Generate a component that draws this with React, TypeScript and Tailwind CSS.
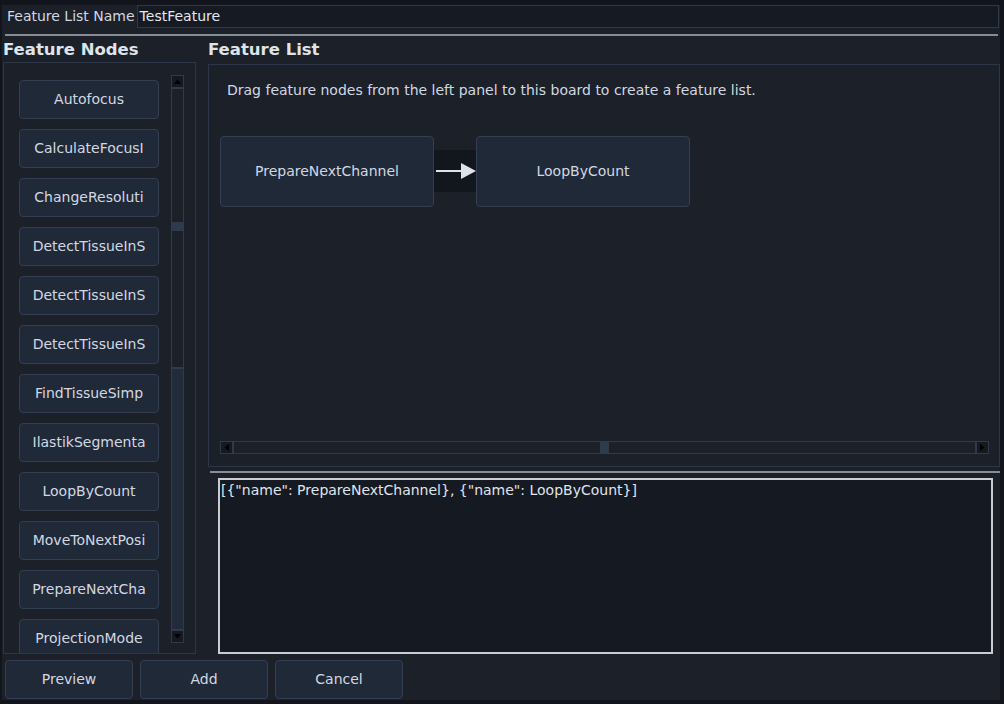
import React from "react";

const nodes = [
  "Autofocus",
  "CalculateFocusI",
  "ChangeResoluti",
  "DetectTissueInS",
  "DetectTissueInS",
  "DetectTissueInS",
  "FindTissueSimp",
  "IlastikSegmenta",
  "LoopByCount",
  "MoveToNextPosi",
  "PrepareNextCha",
  "ProjectionMode",
];

function NodeButton({ label }: { label: string }) {
  return (
    <div className="h-[39px] w-[140px] shrink-0 overflow-hidden whitespace-nowrap rounded-[4px] border border-[#343e50] bg-[#202938] px-[12px] text-center text-[14px] leading-[37px] text-[#d2d8e2]">
      {label}
    </div>
  );
}

function Btn({ label }: { label: string }) {
  return (
    <div className="flex h-[39px] w-[128px] items-center justify-center rounded-[4px] border border-[#343e50] bg-[#202938] text-[14px] text-[#d2d8e2]">
      {label}
    </div>
  );
}

export default function App() {
  return (
    <div
      className="flex h-[704px] w-[1004px] flex-col overflow-hidden border-t-[5px] border-l-[2px] border-r-[4px] border-b-[4px] border-[#12151b] bg-[#1b2029] text-[#d2d8e2]"
      style={{ fontFamily: '"DejaVu Sans", Verdana, sans-serif' }}
    >
      {/* name row */}
      <div className="flex h-[23px] items-center pr-[1px]">
        <div className="pl-[5px] pr-[2px] text-[14px] text-[#d2d8e2]">Feature List Name</div>
        <div className="flex h-[23px] flex-1 items-center border border-[#2e3849] bg-[#151a23] px-[2px] text-[14px] text-[#e4e8ee]">
          TestFeature
        </div>
      </div>
      <div className="ml-[3px] mr-[2px] mt-[6px] h-[2px] bg-[#878c95]" />

      {/* main */}
      <div className="flex min-h-0 flex-1 pt-[4px]">
        {/* left */}
        <div className="flex w-[194px] flex-col pl-[1px]">
          <div className="h-[24px] text-[16.5px] font-bold leading-[19px] text-[#dfe3ea]">Feature Nodes</div>
          <div className="flex h-[592px] border border-[#2d3646] pl-[15px] pt-[12px]">
            <div className="flex w-[140px] flex-col gap-[10px] overflow-hidden pt-[5px]">
              {nodes.map((n, i) => (
                <NodeButton key={i} label={n} />
              ))}
            </div>
            <div className="ml-[12px] flex h-[568px] w-[13px] flex-col border border-[#2f3a4d] bg-[#1b2029]">
              <div className="flex h-[11px] items-center justify-center bg-[#151a22]">
                <svg width="7" height="5" viewBox="0 0 7 5">
                  <path d="M0 5 L3.5 0.5 L7 5 Z" fill="#000" />
                </svg>
              </div>
              <div className="h-[2px] bg-[#2f3a4d]" />
              <div className="h-[133px]" />
              <div className="h-[9px] bg-[#2f3a4d]" />
              <div className="h-[136px]" />
              <div className="h-[2px] bg-[#2f3a4d]" />
              <div className="flex-1 bg-[#222b3a]" />
              <div className="h-[2px] bg-[#2f3a4d]" />
              <div className="flex h-[11px] items-center justify-center bg-[#151a22]">
                <svg width="7" height="5" viewBox="0 0 7 5">
                  <path d="M0 0 L7 0 L3.5 4.5 Z" fill="#000" />
                </svg>
              </div>
            </div>
          </div>
        </div>

        {/* right */}
        <div className="ml-[12px] flex flex-1 flex-col">
          <div className="h-[24px] text-[16.5px] font-bold leading-[19px] text-[#dfe3ea]">Feature List</div>
          <div className="flex h-[404px] flex-col border border-[#2d3646] pl-[11px] pr-[10px]">
            <div className="pl-[7px] pt-[16px] text-[14px] leading-[18px] text-[#d2d8e2]">
              Drag feature nodes from the left panel to this board to create a feature list.
            </div>
            <div className="mt-[37px] flex items-center">
              <div className="flex h-[71px] w-[214px] items-center justify-center rounded-[4px] border border-[#343e50] bg-[#202938] text-[14px] text-[#d2d8e2]">
                PrepareNextChannel
              </div>
              <div className="flex h-[42px] w-[42px] items-center justify-center bg-[#12161d]">
                <svg width="42" height="42" viewBox="0 0 42 42">
                  <line x1="2" y1="21" x2="30" y2="21" stroke="#dfe3ea" strokeWidth="2" />
                  <path d="M27 13 L42 21 L27 29 Z" fill="#dfe3ea" />
                </svg>
              </div>
              <div className="flex h-[71px] w-[214px] items-center justify-center rounded-[4px] border border-[#343e50] bg-[#202938] text-[14px] text-[#d2d8e2]">
                LoopByCount
              </div>
            </div>
            <div className="flex-1" />
            <div className="mb-[12px] flex h-[13px] border border-[#2f3a4d] bg-[#1b2029]">
              <div className="flex w-[11px] items-center justify-center bg-[#151a22]">
                <svg width="5" height="7" viewBox="0 0 5 7">
                  <path d="M5 0 L0.5 3.5 L5 7 Z" fill="#000" />
                </svg>
              </div>
              <div className="w-[2px] bg-[#2f3a4d]" />
              <div className="w-[366px]" />
              <div className="w-[9px] bg-[#2f3a4d]" />
              <div className="flex-1" />
              <div className="w-[2px] bg-[#2f3a4d]" />
              <div className="flex w-[11px] items-center justify-center bg-[#151a22]">
                <svg width="5" height="7" viewBox="0 0 5 7">
                  <path d="M0 0 L4.5 3.5 L0 7 Z" fill="#000" />
                </svg>
              </div>
            </div>
          </div>
          <div className="ml-[2px] mt-[4px] h-[2px] bg-[#878c95]" />
          <div className="ml-[10px] mr-[7px] mt-[5px] h-[176px] border-2 border-[#c9ccd1] bg-[#141922] pl-[1px] pt-[1px] text-[14px] leading-[18px] text-[#e0e4ea]">
            {'[{"name": PrepareNextChannel}, {"name": LoopByCount}]'}
          </div>
        </div>
      </div>

      {/* bottom buttons */}
      <div className="flex gap-[7px] pb-[1px] pl-[3px] pt-[6px]">
        <Btn label="Preview" />
        <Btn label="Add" />
        <Btn label="Cancel" />
      </div>
    </div>
  );
}
